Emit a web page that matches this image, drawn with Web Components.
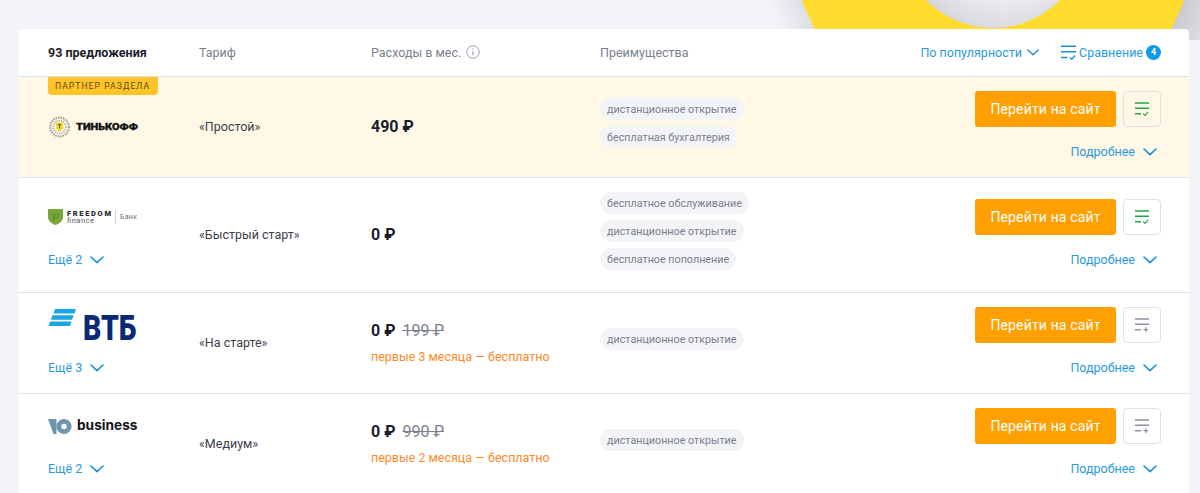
<!DOCTYPE html>
<html lang="ru">
<head>
<meta charset="utf-8">
<title>Предложения</title>
<style>
  html, body { margin: 0; height: 493px; overflow: hidden; background: #f3f4f8; }
  body { font-family: Roboto, "Liberation Sans", sans-serif; }
</style>
</head>
<body>
<offers-page>
  <offers-table>
    <offers-head count="93 предложения"></offers-head>
    <offer-row partner tariff="«Простой»" price="490 ₽" logo="tinkoff" selected>
      <offer-tag>дистанционное открытие</offer-tag>
      <offer-tag>бесплатная бухгалтерия</offer-tag>
    </offer-row>
    <offer-row tariff="«Быстрый старт»" price="0 ₽" logo="freedom" more="Ещё 2" selected>
      <offer-tag>бесплатное обслуживание</offer-tag>
      <offer-tag>дистанционное открытие</offer-tag>
      <offer-tag>бесплатное пополнение</offer-tag>
    </offer-row>
    <offer-row tariff="«На старте»" price="0 ₽" old="199 ₽" note="первые 3 месяца — бесплатно" logo="vtb" more="Ещё 3">
      <offer-tag>дистанционное открытие</offer-tag>
    </offer-row>
    <offer-row tariff="«Медиум»" price="0 ₽" old="990 ₽" note="первые 2 месяца — бесплатно" logo="yoo" more="Ещё 2">
      <offer-tag>дистанционное открытие</offer-tag>
    </offer-row>
  </offers-table>
</offers-page>

<script>
  const chevron = `<svg width="14" height="8" viewBox="0 0 14 8" fill="none" stroke="#1a8fd8" stroke-width="1.6" stroke-linecap="round" stroke-linejoin="round"><path d="M1 1l6 5.6L13 1"/></svg>`;

  class OffersPage extends HTMLElement {
    connectedCallback() {
      this.attachShadow({ mode: "open" });
      this.shadowRoot.innerHTML = `
        <style>
          :host { display: block; position: relative; height: 493px; padding: 29px 11px 0 19px; box-sizing: border-box; overflow: hidden; }
          /* декоративное кольцо за таблицей */
          .deco { position: absolute; left: 0; top: 0; z-index: 0; }
          .content { position: relative; z-index: 1; }
        </style>
        <svg class="deco" width="1200" height="40" viewBox="0 0 1200 40">
          <defs>
            <radialGradient id="ringShade" gradientUnits="userSpaceOnUse" cx="1010" cy="-66" r="250">
              <stop offset="0.72" stop-color="#c4c6cb"/>
              <stop offset="1" stop-color="#f3f4f8"/>
            </radialGradient>
            <radialGradient id="holeShade" gradientUnits="userSpaceOnUse" cx="1005" cy="-60" r="96">
              <stop offset="0.55" stop-color="#eff0f3"/>
              <stop offset="1" stop-color="#d5d7dc"/>
            </radialGradient>
          </defs>
          <circle cx="1010" cy="-66" r="250" fill="url(#ringShade)"/>
          <circle cx="993" cy="-66" r="202" fill="#ffdc2d"/>
          <circle cx="993" cy="-66" r="94" fill="url(#holeShade)"/>
        </svg>
        <div class="content"><slot></slot></div>
      `;
    }
  }

  class OffersTable extends HTMLElement {
    connectedCallback() {
      this.attachShadow({ mode: "open" });
      this.shadowRoot.innerHTML = `
        <style>
          :host { display: block; background: #fff; border-radius: 4px 4px 0 0; overflow: hidden; }
        </style>
        <slot></slot>
      `;
    }
  }

  class OffersHead extends HTMLElement {
    connectedCallback() {
      this.attachShadow({ mode: "open" });
      this.shadowRoot.innerHTML = `
        <style>
          :host {
            display: grid; grid-template-columns: 151px 172px 229px 1fr auto;
            align-items: center; height: 46px; padding: 0 28px 1px 29px;
            border-bottom: 1px solid #dfe1e8; box-sizing: content-box; font-size: 12.5px; color: #7a7f8f;
          }
          b { color: #1a1d2b; font-weight: 700; }
          .cost { display: flex; align-items: center; gap: 5px; }
          .right { display: flex; align-items: center; color: #2a9ae0; }
          .sort { display: flex; align-items: center; gap: 5px; margin-right: 22px; }
          .sort svg { width: 12px; height: 7px; margin-top: 1px; }
          .compare { display: flex; align-items: center; }
          .compare compare-icon { margin-right: 3px; }
          .badge {
            width: 15px; height: 15px; margin-left: 3px; border-radius: 50%; background: #0f9ae6; color: #fff;
            font-size: 9px; font-weight: 700; display: flex; align-items: center; justify-content: center;
          }
        </style>
        <b>${this.getAttribute("count")}</b>
        <span>Тариф</span>
        <span class="cost">Расходы в мес.
          <svg width="14" height="14" viewBox="0 0 14 14" fill="none"><circle cx="7" cy="7" r="6.2" stroke="#9a9eab"/><path d="M7 6.2v4M7 3.6v1.2" stroke="#9a9eab" stroke-width="1.2"/></svg>
        </span>
        <span>Преимущества</span>
        <div class="right">
          <span class="sort">По популярности ${chevron}</span>
          <span class="compare"><compare-icon color="#1a8fd8" width="15" mark="check"></compare-icon>Сравнение<span class="badge">4</span></span>
        </div>
      `;
    }
  }

  class CompareIcon extends HTMLElement {
    connectedCallback() {
      this.attachShadow({ mode: "open" });
      const color = this.getAttribute("color");
      const w = this.getAttribute("width") || 14;
      const mark = this.getAttribute("mark") === "plus"
        ? `<path d="M11.6 9.9v5M9.1 12.4h5" stroke-width="1.3"/>`
        : `<path d="M8.8 12.4l1.9 1.9 3.4-3.8" stroke-width="1.3"/>`;
      this.shadowRoot.innerHTML = `
        <style>:host { display: inline-flex; } svg { display: block; }</style>
        <svg width="${w}" height="${w}" viewBox="0 0 15 15" fill="none" stroke="${color}" stroke-width="1.6">
          <path d="M0 1.200h15M0 6.800h15M0 12.500h6.500"/>${mark}
        </svg>
      `;
    }
  }

  class OfferTag extends HTMLElement {
    connectedCallback() {
      this.attachShadow({ mode: "open" });
      this.shadowRoot.innerHTML = `
        <style>
          :host {
            display: inline-flex; align-items: center; height: 22px; padding: 0 7px; border-radius: 11px;
            background: #f3f4f8; color: #7a7f8f; font-size: 10.75px; white-space: nowrap;
          }
        </style>
        <slot></slot>
      `;
    }
  }

  class BankLogo extends HTMLElement {
    connectedCallback() {
      this.attachShadow({ mode: "open" });
      const logos = {
        tinkoff: `
          <svg width="92" height="24" viewBox="0 0 92 24">
            <circle cx="11.5" cy="12" r="9.4" fill="none" stroke="#9a9a92" stroke-width="2" stroke-dasharray="1.5 1"/>
            <circle cx="11.5" cy="12" r="6.4" fill="none" stroke="#b0b0a8" stroke-width="1.8" stroke-dasharray="1.2 1"/>
            <path d="M8 7.500h7v5.800l-3.500 3.600L8 13.300z" fill="#f6d32c"/>
            <path d="M10 9h3v1h-1v3.500h-1V10h-1z" fill="#6b6236"/>
            <text x="28" y="15" font-family="Roboto, sans-serif" font-size="8.500" font-weight="900" fill="#111" stroke="#111" stroke-width=".3" textLength="62" lengthAdjust="spacingAndGlyphs">ТИНЬКОФФ</text>
          </svg>`,
        freedom: `
          <svg width="92" height="20" viewBox="0 0 92 20">
            <path d="M0 2h15v8c0 4-3.600 6.600-7.500 8C3.600 16.600 0 14 0 10z" fill="#79a63a"/>
            <path d="M5 6.500h6.600v1.300H6.500v2h4v1.300h-4v3.200H5z" fill="#5b8c30"/>
            <text x="19" y="8.600" font-family="Roboto, sans-serif" font-size="7.500" font-weight="900" fill="#26282e" textLength="44" lengthAdjust="spacing">FREEDOM</text>
            <text x="19" y="15.800" font-family="Roboto, sans-serif" font-size="7.500" fill="#55585f" textLength="27" lengthAdjust="spacing">finance</text>
            <path d="M67.500 3v13.500" stroke="#d4d5d8"/>
            <text x="72" y="12" font-family="Roboto, sans-serif" font-size="7" fill="#6c6f76" textLength="17" lengthAdjust="spacing">Банк</text>
          </svg>`,
        vtb: `
          <svg width="92" height="36" viewBox="0 0 92 36">
            <path d="M7 2h21l-1.500 4.500H5.500zM4.400 8.200h21.200l-1.500 4.500H2.900zM2.200 14.500h21.300L22 19H.7z" fill="#1ba5e1"/>
            <text x="35" y="33" font-family="Roboto, sans-serif" font-size="34.500" font-weight="900" fill="#0c2a73" textLength="53.500" lengthAdjust="spacingAndGlyphs">ВТБ</text>
          </svg>`,
        yoo: `
          <svg width="92" height="20" viewBox="0 0 92 20">
            <path d="M0 3h8.500v15H5.500z" fill="#6f94ad"/>
            <circle cx="16" cy="10.500" r="5.200" fill="none" stroke="#6f94ad" stroke-width="4.800"/>
            <text x="29" y="14" font-family="Inter, Roboto, sans-serif" font-size="14" font-weight="700" fill="#14161c" textLength="60.500" lengthAdjust="spacingAndGlyphs">business</text>
          </svg>`
      };
      this.shadowRoot.innerHTML = `
        <style>:host { display: flex; align-items: center; height: 36px; } svg { display: block; overflow: visible; }</style>
        ${logos[this.getAttribute("kind")]}
      `;
    }
  }

  class OfferRow extends HTMLElement {
    connectedCallback() {
      this.attachShadow({ mode: "open" });
      const attr = (name) => this.getAttribute(name);
      const partner = this.hasAttribute("partner");
      const selected = this.hasAttribute("selected");
      this.shadowRoot.innerHTML = `
        <style>
          :host {
            display: grid; grid-template-columns: 151px 172px 229px 1fr auto;
            align-items: center; position: relative; padding: 14px 28px 14px 29px;
            border-bottom: 1px solid #dfe1e8; font-size: 12.5px; color: #3b3e4c;
            ${partner ? "background: #fff8e6;" : ""}
          }
          .badge {
            position: absolute; left: 29px; top: 0; height: 18px; padding: 0 7px; box-sizing: border-box; width: 110px;
            display: flex; align-items: center; background: #ffc428; border-radius: 0 0 4px 4px;
            color: #5a4a1c; font-size: 8.5px; letter-spacing: 1.1px; white-space: nowrap;
          }
          .link { display: flex; align-items: center; gap: 8px; height: 18px; margin: 15px 0 3px; color: #2a9ae0; }
          .actions .link { margin-right: 4px; }
          .link svg { margin-top: 1px; }
          .bank { display: flex; flex-direction: column; justify-content: center; }
          .tariff, .cost { margin-bottom: 2px; }
          .now { display: flex; align-items: baseline; gap: 7px; font-size: 16px; font-weight: 700; color: #1a1d2b; }
          .now s { font-weight: 400; color: #7a7f8f; }
          .note { margin-top: 9px; color: #ff8a2a; }
          .tags { display: flex; flex-direction: column; align-items: flex-start; gap: 6px; margin: 0 0 8px; }
          .actions { display: flex; flex-direction: column; align-items: flex-end; }
          .buttons { display: flex; gap: 7px; }
          .go {
            display: flex; align-items: center; justify-content: center; width: 141px; height: 36px; border-radius: 3px;
            background: #ff9f00; color: #fff; font-size: 14px; letter-spacing: .15px;
          }
          .cmp {
            display: flex; align-items: center; justify-content: center; width: 38px; height: 36px; box-sizing: border-box;
            border: 1px solid #dfe1e8; border-radius: 4px;
          }
        </style>
        ${partner ? `<div class="badge">ПАРТНЕР РАЗДЕЛА</div>` : ""}
        <div class="bank">
          <bank-logo kind="${attr("logo")}"></bank-logo>
          ${attr("more") ? `<div class="link">${attr("more")} ${chevron}</div>` : ""}
        </div>
        <div class="tariff">${attr("tariff")}</div>
        <div class="cost">
          <div class="now">${attr("price")} ${attr("old") ? `<s>${attr("old")}</s>` : ""}</div>
          ${attr("note") ? `<div class="note">${attr("note")}</div>` : ""}
        </div>
        <div class="tags"><slot></slot></div>
        <div class="actions">
          <div class="buttons">
            <div class="go">Перейти на сайт</div>
            <div class="cmp"><compare-icon color="${selected ? "#1fa64a" : "#8d919f"}" mark="${selected ? "check" : "plus"}"></compare-icon></div>
          </div>
          <div class="link">Подробнее ${chevron}</div>
        </div>
      `;
    }
  }

  customElements.define("compare-icon", CompareIcon);
  customElements.define("bank-logo", BankLogo);
  customElements.define("offer-tag", OfferTag);
  customElements.define("offers-head", OffersHead);
  customElements.define("offer-row", OfferRow);
  customElements.define("offers-table", OffersTable);
  customElements.define("offers-page", OffersPage);
</script>
</body>
</html>
